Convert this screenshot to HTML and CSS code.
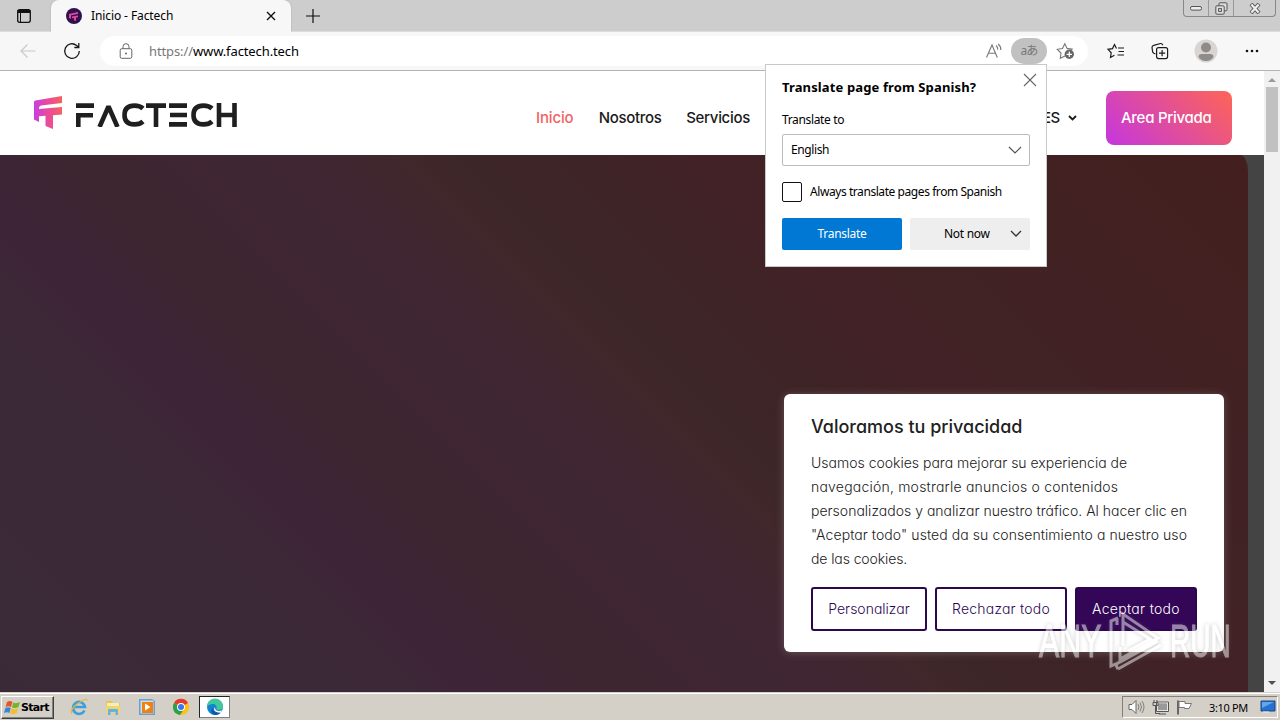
FILE: index.html
```html
<!DOCTYPE html>
<html lang="es">
<head>
<meta charset="utf-8">
<title>Inicio - Factech</title>
<link rel="stylesheet" href="styles.css">
</head>
<body>
<div class="desktop">
  <div class="tabbar">
    <svg class="tab-actions" width="16" height="16" viewBox="0 0 16 16"><rect x="1.700" y="1.700" width="12.600" height="12.600" rx="2" fill="none" stroke="#111" stroke-width="1.300"/><path d="M1.700 2h12.600v3H1.700z" fill="#111"/><path d="M4.500 4v10" stroke="#111"/></svg>
    <div class="tab">
      <svg width="16" height="16" viewBox="0 0 16 16"><circle cx="8" cy="8" r="8" fill="#32104f"/><path d="M3 6l9-2v2L5 7.300v3.500L3 10zM6 8.500l6-1v1.700l-2 .4V13l-2-.7V10l-2 .3z" fill="#e04a9c"/></svg>
      <span class="tab-title">Inicio - Factech</span>
      <svg class="tab-close" width="10" height="10" viewBox="0 0 10 10"><path d="M1 1l8 8M9 1L1 9" stroke="#111" stroke-width="1.400"/></svg>
    </div>
    <svg class="new-tab" width="14" height="14" viewBox="0 0 14 14"><path d="M7 0v14M0 7h14" stroke="#111" stroke-width="1.200"/></svg>
    <div class="window-buttons">
      <span class="wb"><svg width="12" height="5" viewBox="0 0 12 5"><rect x=".5" y=".5" width="11" height="3.600" rx="1.500" fill="#eee" stroke="#555"/></svg></span>
      <span class="wb"><svg width="13" height="13" viewBox="0 0 13 13"><g fill="#ddd" stroke="#555"><rect x="4" y=".8" width="8" height="8" rx="1"/><rect x=".8" y="3.800" width="8.400" height="8.400" rx="1"/><rect x="3.600" y="6.600" width="2.800" height="2.800"/></g></svg></span>
      <span class="wb wide"><svg width="12" height="11" viewBox="0 0 12 11"><path d="M2 1l8 9M10 1L2 10" stroke="#555" stroke-width="4"/><path d="M2.400 1.400l7.200 8.200M9.600 1.400l-7.200 8.200" stroke="#eee" stroke-width="2.200"/></svg></span>
    </div>
  </div>

  <div class="toolbar">
    <svg class="back" width="18" height="16" viewBox="0 0 18 16"><path d="M16.500 8H2M8.500 1.500L2 8l6.500 6.500" fill="none" stroke="#c9c9c9" stroke-width="1.200"/></svg>
    <svg class="reload" width="18" height="18" viewBox="0 0 18 18"><path d="M16.300 9A7.300 7.300 0 1 1 13.600 3.400L15.500 5M15.800 1v4.500h-4.500" fill="none" stroke="#1b1b1b" stroke-width="1.300"/></svg>
    <div class="address">
      <svg class="lock" width="14" height="17" viewBox="0 0 14 17"><rect x="1.200" y="5.700" width="11.600" height="9.600" rx="1.500" fill="none" stroke="#666"/><path d="M4 5.500V3.700a3 3 0 0 1 6 0v1.800" fill="none" stroke="#666"/><circle cx="7" cy="10.500" r="1" fill="#666"/></svg>
      <span class="url"><span class="scheme">https://</span>www.factech.tech</span>
      <svg class="read" width="18" height="16" viewBox="0 0 18 16"><path d="M1.500 14.500L7 2l5.300 12.500M3.400 10.200h7.200M11 2.500q2 1.600 1.800 4.200M13.200 1q3 2.500 2.600 6" fill="none" stroke="#777" stroke-width="1.100"/></svg>
      <span class="translate-pill">aあ</span>
      <svg class="fav" width="19" height="18" viewBox="0 0 19 18"><path d="M9 14l-4.700 2.300.7-5.300-3.700-3.700 5.200-.8L8.800 1.700l2.300 4.700 5 .8-1.600 1.600" fill="none" stroke="#777" stroke-width="1.100"/><circle cx="13.300" cy="12.300" r="4.700" fill="#666"/><path d="M13.300 9.600V15M10.600 12.300H16" stroke="#fff" stroke-width="1.200"/></svg>
    </div>
    <svg class="favs" width="18" height="16" viewBox="0 0 18 16"><path d="M11 5h6M11.500 8.500H17M10.500 12H17M7.500 12.300L3.500 14.500l.7-4.700L1 6.300l4.500-.7L7.500 1.500l2 4" fill="none" stroke="#1b1b1b" stroke-width="1.200"/></svg>
    <svg class="coll" width="18" height="18" viewBox="0 0 18 18"><g fill="none" stroke="#1b1b1b" stroke-width="1.200"><path d="M4.500 12L2.800 11.300Q1.600 10.600 1.500 9L1 5.500Q1 3.800 2.700 3.400L9.500 1.500Q11.200 1.300 11.800 3.200"/><rect x="5.600" y="5.600" width="11" height="11" rx="2"/><path d="M11.100 8v6.200M8 11.100h6.200"/></g></svg>
    <svg class="avatar" width="24" height="24" viewBox="0 0 24 24"><circle cx="12" cy="12" r="11.500" fill="#d8d5d3"/><circle cx="12" cy="8.500" r="5" fill="#8f8b89"/><path d="M4.500 18q0-3 3.500-3h8q3.500 0 3.500 3-2.500 4-7.500 4t-7.500-4z" fill="#8f8b89"/></svg>
    <svg class="more" width="14" height="4" viewBox="0 0 14 4"><g fill="#111"><circle cx="2" cy="2" r="1.300"/><circle cx="7" cy="2" r="1.300"/><circle cx="12" cy="2" r="1.300"/></g></svg>
  </div>

  <div class="viewport">
    <div class="page">
      <header class="site-header">
        <svg class="mark" width="30" height="36" viewBox="0 0 30 36">
          <defs><linearGradient id="g" x1="0" y1="0" x2="1" y2="0"><stop offset="0" stop-color="#c63fe0"/><stop offset=".5" stop-color="#ea4a9c"/><stop offset="1" stop-color="#f4625e"/></linearGradient></defs>
          <path d="M1 7Q1 5.800 2.500 5.500L29 1v7L8 10.500Q6 11 6 13v1L29 12v7.500l-9 .8V34l-7.500-3V20.800L6 21.300V27L1 24.500z" fill="url(#g)"/>
        </svg>
        <svg class="wordmark" role="img" aria-label="FACTECH" width="164" height="24" viewBox="0 0 164 24"><g fill="none" stroke="#1f1f1f" stroke-width="4.600"><path d="M1 2.600H19M1 12.200H18M3.300 11V24"/><path d="M24.500 24L33.500 3.500 42.500 24" stroke-linejoin="bevel"/><path d="M68 5.500Q65 2.600 59.500 2.600 49.500 2.600 49.500 12T59.500 21.400Q65 21.400 68 18.500"/><path d="M71 2.600H91M81 2V24"/><path d="M94 2.600H112M95 12H112M94 21.400H112"/><path d="M137 5.500Q134 2.600 128.500 2.600 118.500 2.600 118.500 12T128.500 21.400Q134 21.400 137 18.500"/><path d="M144 0V24M159.500 0V24M144 12H160"/></g></svg>
        <nav class="nav">
          <span class="on">Inicio</span><span class="n2">Nosotros</span><span class="n3">Servicios</span>
        </nav>
        <span class="lang">ES<svg width="9" height="6" viewBox="0 0 9 6"><path d="M1 1l3.500 3.500L8 1" fill="none" stroke="#1a1a1a" stroke-width="1.800"/></svg></span>
        <span class="private">Area Privada</span>
      </header>
      <main class="hero"><div class="hero-panel"></div></main>
    </div>
    <div class="scroll"><i class="up"></i><i class="thumb"></i><i class="down"></i></div>
  </div>

  <div class="taskbar">
    <span class="start"><svg width="17" height="15" viewBox="0 0 17 15"><path d="M3 2q3-2 5.500 0L7 7Q4.500 5.500 1.500 7z" fill="#e8542a"/><path d="M9.300 2.500Q12 4 16 2l-1.600 5q-3 1.500-6.500.5z" fill="#74b42d"/><path d="M1.300 8Q4 6.500 6.800 8L5.400 13Q3 11.500 0 13z" fill="#3886d8"/><path d="M7.600 8.500q3 1.500 6.500 0L12.700 13q-3 2-6.500.5z" fill="#f7bd24"/></svg>Start</span>
    <svg class="app ie" width="18" height="18" viewBox="0 0 18 18"><path d="M14.500 12.500A6 6 0 1 1 15 9H4" fill="none" stroke="#3d9edc" stroke-width="2.600"/><path d="M2 16Q-1 12 8 5.500T17 2.500" fill="none" stroke="#e6b940" stroke-width="1.300"/></svg>
    <svg class="app" width="18" height="18" viewBox="0 0 18 18"><path d="M2 3h6l1 2h7v10H2z" fill="#e9c45a"/><path d="M3 5h12v5H3z" fill="#f9eeb2"/><path d="M2 8h14v7H2z" fill="#f0d373"/><path d="M4 17v-5q0-1 1-1h8q1 0 1 1v5h-2.500v-3h-5v3z" fill="#63b3da"/></svg>
    <svg class="app" width="18" height="18" viewBox="0 0 18 18"><path d="M1 1h13l3 2v14H1z" fill="#6b9fc8"/><path d="M2.500 2.500h13v13h-13z" fill="#c9def0"/><path d="M4 4h11v11H4z" fill="#f08010"/><path d="M7 5.500L12.500 9 7 12.500z" fill="#fff"/></svg>
    <svg class="app" width="18" height="18" viewBox="0 0 18 18"><circle cx="9" cy="9" r="8" fill="#fbc116"/><path d="M9 9L2 5a8 8 0 0 1 14 0z" fill="#e33b2e"/><path d="M9 9L2 5a8 8 0 0 0 6 12l4-6z" fill="#2da04c"/><circle cx="9" cy="9" r="4" fill="#fff"/><circle cx="9" cy="9" r="3" fill="#3b78e7"/></svg>
    <span class="active-app"><svg width="18" height="18" viewBox="0 0 18 18"><circle cx="9" cy="9" r="8" fill="#1683d2"/><path d="M1 9a8 8 0 0 1 16-1q.3 3.500-4 4-3 0-2.500-2Q11 7 8 6 3 5.500 1 9z" fill="#42c99b"/><path d="M6.500 9.500Q6 14 13.500 14.200L16 13Q13 17.500 8.500 17 3 15 6.500 9.500z" fill="#1258a5"/><path d="M10 8q-2 2 0 4.200 3 1.600 6 0l-1 2.500q-7 0-7-4z" fill="#fff"/></svg></span>
    <div class="tray">
      <svg width="17" height="16" viewBox="0 0 17 16"><path d="M1 5.500h3L8 1.500v13L4 10.500H1z" fill="#fff" stroke="#666"/><path d="M10 5q2 3 0 6M12 3.500q3 4.500 0 9M14 2q4 6 0 12" fill="none" stroke="#777" stroke-width=".9"/></svg>
      <svg class="net" width="17" height="16" viewBox="0 0 17 16"><rect x="5" y="3.500" width="11" height="8.500" fill="#999" stroke="#fff" stroke-width="1.500"/><path d="M4.500 3H16.500V12.500H4.500zM7 15h7M3.500 7v7.500H8M2 1v3M5 1v3M1 3.500h5v3H1z" fill="none" stroke="#555"/></svg>
      <svg width="17" height="16" viewBox="0 0 17 16"><path d="M2 1.500V15.500" stroke="#666" stroke-width="2"/><path d="M3 2.500h6v2h6.500L13 9.500H8.500v-1H3z" fill="#fff" stroke="#777"/></svg>
      <span class="clock">3:10 PM</span>
      <svg class="desk" width="16" height="14" viewBox="0 0 16 14"><path d="M1 1h14v10H1z" fill="#2670cf" stroke="#164785"/><path d="M2 2h12L2 8z" fill="#64a5ed"/><path d="M3 12h6" stroke="#eee"/></svg>
    </div>
  </div>

  <section class="cookies">
    <h2>Valoramos tu privacidad</h2>
    <p><span class="l1">Usamos cookies para mejorar su experiencia de</span><span class="l2">navegación, mostrarle anuncios o contenidos</span><span class="l3">personalizados y analizar nuestro tráfico. Al hacer clic en</span><span class="l4">"Aceptar todo" usted da su consentimiento a nuestro uso</span><span class="l5">de las cookies.</span></p>
    <div class="choices"><span class="c1">Personalizar</span><span class="c2">Rechazar todo</span><span class="c3">Aceptar todo</span></div>
  </section>

  <section class="popup">
    <svg class="popup-close" width="14" height="14" viewBox="0 0 14 14"><path d="M1 1l12 12M13 1L1 13" stroke="#666" stroke-width="1.100"/></svg>
    <h3>Translate page from Spanish?</h3>
    <label class="to">Translate to</label>
    <div class="select"><span>English</span><svg width="14" height="8" viewBox="0 0 14 8"><path d="M1 1l6 6 6-6" fill="none" stroke="#555" stroke-width="1.200"/></svg></div>
    <div class="always"><i class="box"></i><span>Always translate pages from Spanish</span></div>
    <div class="actions"><span class="go">Translate</span><span class="later">Not now<svg width="12" height="8" viewBox="0 0 12 8"><path d="M1 1l5 5 5-5" fill="none" stroke="#333" stroke-width="1.300"/></svg></span></div>
  </section>

  <div class="watermark"><span>ANY</span><svg width="56" height="64" viewBox="0 0 56 64"><path d="M10 9L3 12V57L12 53V38M9 9V16M15 37V5L50 29 12 50M15 13L42 30 20 42M10 60L53 36M10 60Q6 55 12 53L50 32" fill="none" stroke="#fff" stroke-width="3"/></svg><span class="run">RUN</span></div>
</div>
</body>
</html>
```
FILE: styles.css
```css
* { box-sizing: border-box; }
body { margin: 0; }
svg { display: block; flex: none; }
.desktop { position: relative; width: 1280px; height: 720px; overflow: hidden; display: flex; flex-direction: column; font-family: "Noto Sans", "Open Sans", sans-serif; font-size: 12px; color: #000; }

.tabbar { height: 32px; flex: none; background: #cdcdcd; display: flex; align-items: center; border-bottom: 1px solid #ddd; }
.tab-actions { margin-left: 16px; }
.tab { margin-left: 19px; width: 240px; height: 32px; align-self: flex-start; background: #f7f7f7; border-radius: 8px 8px 0 0; display: flex; align-items: center; padding: 0 15px; box-shadow: 0 0 2px #aaa; }
.tab-title { margin: -1px 0 0 9px; flex: 1; letter-spacing: -.1px; }
.new-tab { margin-left: 15px; }
.window-buttons { margin-left: auto; margin-right: 4px; align-self: flex-start; height: 17px; display: flex; border: 1px solid #888; border-top: 0; border-radius: 0 0 4px 4px; }
.wb { width: 25px; display: flex; align-items: center; justify-content: center; border-right: 1px solid #999; }
.wb.wide { width: 41px; border: 0; }

.toolbar { height: 39px; flex: none; background: #f7f7f7; border-bottom: 1px solid #b4b4b4; display: flex; align-items: center; }
.back { margin-left: 19px; }
.reload { margin-left: 26px; }
.address { margin-left: 19px; width: 988px; height: 30px; background: #fff; border-radius: 15px; display: flex; align-items: center; padding-left: 19px; }
.url { margin-left: 16px; font-size: 13px; letter-spacing: -.11px; flex: 1; }
.scheme { color: #777; }
.read { margin-right: 8px; }
.translate-pill { width: 36px; height: 26px; border-radius: 13px; background: #c1c1c1; color: #777; display: flex; align-items: center; justify-content: center; padding-bottom: 2px; font: 12px "Noto Sans", "Noto Sans CJK JP", sans-serif; letter-spacing: -.8px; }
.fav { margin: 0 13px 0 9px; }
.favs { margin-left: 19px; }
.coll { margin-left: 26px; }
.avatar { margin-left: 25px; }
.more { margin-left: 27px; }

.viewport { flex: 1; display: flex; min-height: 0; }
.page { flex: 1; display: flex; flex-direction: column; }
.scroll { width: 16px; background: #f1f1f1; display: flex; flex-direction: column; align-items: center; }
.up, .down { border: 4px solid transparent; }
.up { border-top: 0; border-bottom-color: #9b9b9b; margin-top: 7px; }
.thumb { width: 12px; height: 65px; margin-top: 5px; background: #c1c1c1; }
.down { border-bottom: 0; border-top-color: #505050; margin-top: auto; margin-bottom: 7px; }

.site-header { height: 84px; flex: none; background: #fff; display: flex; align-items: center; font-family: Inter, sans-serif; font-feature-settings: "cv11", "ss03"; font-size: 15px; font-weight: 500; color: #1a1a1a; }
.mark { margin-left: 33px; }
.wordmark { margin: 4px 0 0 12px; }
.nav { margin-left: 297px; margin-top: 9px; display: flex; width: 214px; letter-spacing: -.3px; }
.nav .on { color: #f06464; width: 63px; letter-spacing: -.15px; }
.nav .n2 { width: 88px; }
.lang { margin: 9px 0 0 292px; display: flex; align-items: center; gap: 8px; width: 36px; letter-spacing: -.6px; }
.private { margin: 10px 0 0 28px; width: 126px; height: 54px; border-radius: 8px; background: linear-gradient(45deg, #c739d8 5%, #fb635c 95%); color: #fff; display: flex; align-items: center; padding: 0 0 1px 15px; letter-spacing: -.27px; }
.hero { flex: 1; background: #444; display: flex; }
.hero-panel { width: 1248px; border-top-right-radius: 8px 16px; background: linear-gradient(45deg, #3a2a38 0%, #3c2837 23%, #3d2537 26%, #3d2536 30%, #3e2630 33%, #3f2633 44%, #402630 49%, #40282a 53%, #3d2628 56%, #3e2427 62%, #422226 69%, #412225 77%, #431f1e 100%); }

.taskbar { height: 28px; flex: none; background: #d4d0c8; border-top: 1px solid #d4d0c8; box-shadow: inset 0 1px #fff; display: flex; align-items: center; padding: 1px 2px 0 1px; }
.start { width: 53px; height: 23px; display: flex; align-items: center; padding-left: 2px; font-family: "DejaVu Sans", sans-serif; font-weight: 700; font-size: 11px; letter-spacing: -.7px; border: 1px solid; border-color: #fff #404040 #404040 #fff; box-shadow: inset -1px -1px #808080; }
.app { margin-left: 16px; }
.ie { margin-left: 16px; }
.active-app { margin-left: 9px; width: 31px; height: 22px; background: #fff; border: 1px solid #808080; border-top-color: #222; border-left-color: #222; display: flex; align-items: center; justify-content: center; }
.tray { margin-left: auto; width: 156px; height: 22px; border: 1px solid; border-color: #808080 #fff #fff #808080; display: flex; align-items: center; padding-left: 5px; gap: 7px; }
.clock { margin-left: 9px; width: 40px; font-size: 11px; letter-spacing: -.35px; white-space: nowrap; }
.desk { margin-left: 4px; }

.cookies { position: absolute; left: 784px; top: 394px; width: 440px; height: 258px; background: #fff; border-radius: 6px; box-shadow: 0 1px 8px rgba(160, 150, 150, .4); padding: 21px 27px; font-family: Inter, sans-serif; font-feature-settings: "cv11"; color: #212121; }
.cookies h2 { margin: 0; font-size: 18px; line-height: 24px; font-weight: 500; letter-spacing: 0; white-space: nowrap; }
.cookies p { margin: 12px 0 16px; font-size: 14px; line-height: 24px; font-weight: 300; }
.cookies p span { display: block; white-space: nowrap; }
.cookies .l2 { letter-spacing: .21px; }
.cookies .l3 { letter-spacing: .01px; }
.cookies .l4 { letter-spacing: .07px; }
.cookies .l5 { letter-spacing: -.1px; }
.choices { display: flex; gap: 8px; font-size: 14px; font-weight: 300; color: #2c0750; }
.choices span { height: 44px; border: 2px solid #2c0750; border-radius: 3px; display: flex; align-items: center; justify-content: center; white-space: nowrap; padding-bottom: 1px; }
.c1 { width: 116px; }
.c2 { width: 132px; letter-spacing: .2px; }
.choices .c3 { width: 122px; background: #330657; color: #fff; letter-spacing: .3px; }

.popup { position: absolute; left: 765px; top: 64px; width: 282px; height: 203px; background: #fff; border: 1px solid #c9c9c9; padding: 12px 16px; }
.popup-close { position: absolute; right: 9px; top: 8px; }
.popup h3 { margin: 0; font-size: 13px; line-height: 20px; font-weight: 700; white-space: nowrap; letter-spacing: .13px; }
.to { display: block; margin-top: 15px; line-height: 16px; letter-spacing: -.35px; }
.select { margin-top: 6px; height: 32px; border: 1px solid #bbb; border-radius: 2px; display: flex; align-items: center; justify-content: space-between; padding: 0 7px 0 8px; letter-spacing: -.4px; }
.always { margin-top: 16px; height: 20px; display: flex; align-items: center; gap: 8px; white-space: nowrap; letter-spacing: -.43px; }
.select span, .always span { padding-bottom: 1px; }
.box { width: 20px; height: 20px; border: 1px solid #111; border-radius: 2px; }
.actions { margin-top: 16px; display: flex; gap: 8px; letter-spacing: -.3px; }
.actions span { width: 120px; height: 32px; border-radius: 2px; display: flex; align-items: center; padding-bottom: 1px; }
.go { background: #0078d4; color: #fff; justify-content: center; }
.actions .later { background: #eee; justify-content: space-between; padding: 0 8px 1px 34px; }

.watermark { position: absolute; left: 1039px; top: 609px; width: 196px; height: 64px; display: flex; align-items: center; opacity: .5; color: #fff; font: 46px/64px "Liberation Sans", sans-serif; -webkit-text-stroke: 1px #fff; filter: drop-shadow(0 0 2px rgba(90, 90, 90, .6)); }
.watermark span { width: 65px; flex: none; white-space: nowrap; transform: scaleX(.66); transform-origin: left; }
.watermark .run { transform: scaleX(.61); }
.watermark svg { margin: 0 6px 0 4px; }
```
